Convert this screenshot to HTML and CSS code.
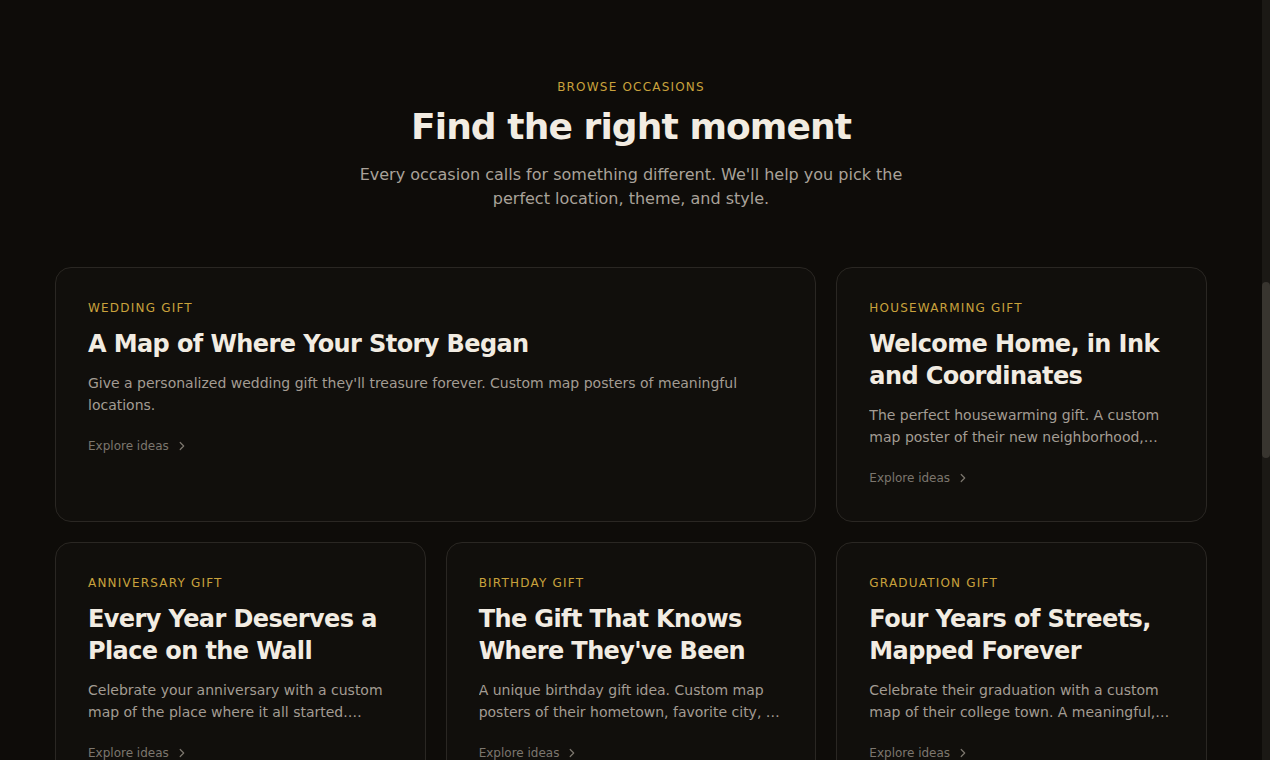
FILE: index.html
```html
<!DOCTYPE html>
<html lang="en">
<head>
<meta charset="utf-8">
<title>Browse occasions</title>
<link rel="stylesheet" href="styles.css">
</head>
<body>
<main class="page">
<section class="occasions">
  <header class="intro">
    <p class="eyebrow">BROWSE OCCASIONS</p>
    <h2 class="heading">Find the right moment</h2>
    <p class="lede">Every occasion calls for something different. We'll help you pick the perfect location, theme, and style.</p>
  </header>
  <div class="grid">
    <a class="card card-wide" href="#">
      <span class="label">WEDDING GIFT</span>
      <h3 class="title">A Map of Where Your Story Began</h3>
      <p class="desc">Give a personalized wedding gift they'll treasure forever. Custom map posters of meaningful locations.</p>
      <span class="more">Explore ideas <svg class="chev" viewBox="0 0 10 10" width="10" height="10"><path d="M3.2 1.5 6.7 5 3.2 8.5" fill="none" stroke="currentColor" stroke-width="1.2" stroke-linecap="round" stroke-linejoin="round"/></svg></span>
    </a>
    <a class="card" href="#">
      <span class="label">HOUSEWARMING GIFT</span>
      <h3 class="title">Welcome Home, in Ink and Coordinates</h3>
      <p class="desc">The perfect housewarming gift. A custom map poster of their new neighborhood, street, or city to make the new place feel like home.</p>
      <span class="more">Explore ideas <svg class="chev" viewBox="0 0 10 10" width="10" height="10"><path d="M3.2 1.5 6.7 5 3.2 8.5" fill="none" stroke="currentColor" stroke-width="1.2" stroke-linecap="round" stroke-linejoin="round"/></svg></span>
    </a>
    <a class="card" href="#">
      <span class="label">ANNIVERSARY GIFT</span>
      <h3 class="title">Every Year Deserves a Place on the Wall</h3>
      <p class="desc">Celebrate your anniversary with a custom map of the place where it all started. Whether it's a first date or a first home.</p>
      <span class="more">Explore ideas <svg class="chev" viewBox="0 0 10 10" width="10" height="10"><path d="M3.2 1.5 6.7 5 3.2 8.5" fill="none" stroke="currentColor" stroke-width="1.2" stroke-linecap="round" stroke-linejoin="round"/></svg></span>
    </a>
    <a class="card" href="#">
      <span class="label">BIRTHDAY GIFT</span>
      <h3 class="title">The Gift That Knows Where They've Been</h3>
      <p class="desc">A unique birthday gift idea. Custom map posters of their hometown, favorite city, or the places that shaped them.</p>
      <span class="more">Explore ideas <svg class="chev" viewBox="0 0 10 10" width="10" height="10"><path d="M3.2 1.5 6.7 5 3.2 8.5" fill="none" stroke="currentColor" stroke-width="1.2" stroke-linecap="round" stroke-linejoin="round"/></svg></span>
    </a>
    <a class="card" href="#">
      <span class="label">GRADUATION GIFT</span>
      <h3 class="title">Four Years of Streets, Mapped Forever</h3>
      <p class="desc">Celebrate their graduation with a custom map of their college town. A meaningful, lasting reminder of where they grew.</p>
      <span class="more">Explore ideas <svg class="chev" viewBox="0 0 10 10" width="10" height="10"><path d="M3.2 1.5 6.7 5 3.2 8.5" fill="none" stroke="currentColor" stroke-width="1.2" stroke-linecap="round" stroke-linejoin="round"/></svg></span>
    </a>
  </div>
</section>
</main>
<div class="scrollbar" aria-hidden="true"><div class="thumb"></div></div>
</body>
</html>
```
FILE: styles.css
```css
html {
  background: #0e0c09;
}

body {
  margin: 0;
  padding-right: 8px;
  background: #0e0c09;
  color: #efe9df;
  font-family: "DejaVu Sans", "Liberation Sans", sans-serif;
}

.page {
  padding-bottom: 120px;
}

.occasions {
  max-width: 1152px;
  margin: 0 auto;
  padding: 80px 0 0;
}

.intro {
  display: flex;
  flex-direction: column;
  align-items: center;
  text-align: center;
  margin-bottom: 56px;
}

.eyebrow {
  margin: 0;
  font-size: 12px;
  line-height: 14px;
  letter-spacing: 1.2px;
  color: #c9a23c;
}

.heading {
  margin: 13px 0 0;
  font-size: 36px;
  line-height: 40px;
  font-weight: 700;
  letter-spacing: -0.025em;
  color: #f2ece2;
}

.lede {
  margin: 16px 0 0;
  max-width: 560px;
  font-size: 16px;
  line-height: 24px;
  color: #a9a299;
}

.grid {
  display: grid;
  grid-template-columns: repeat(3, 1fr);
  gap: 20px 20px;
}

.card {
  display: flex;
  flex-direction: column;
  align-items: flex-start;
  padding: 32px 32px 33px;
  border: 1px solid #2a2723;
  border-radius: 16px;
  background: #110f0c;
  text-decoration: none;
  color: inherit;
}

.card-wide { grid-column: span 2; }

.label {
  font-size: 12px;
  line-height: 16px;
  letter-spacing: 1.2px;
  color: #c9a23c;
}

.title {
  margin: 12px 0 0;
  font-size: 24px;
  line-height: 32px;
  font-weight: 700;
  letter-spacing: -0.025em;
  color: #f2ece2;
}

.desc {
  margin: 12px 0 0;
  font-size: 14px;
  line-height: 22px;
  color: #a39c93;
  display: -webkit-box;
  -webkit-line-clamp: 2;
  -webkit-box-orient: vertical;
  overflow: hidden;
}

.more {
  margin-top: 20px;
  display: inline-flex;
  align-items: center;
  gap: 8px;
  font-size: 12px;
  line-height: 20px;
  color: #7c766e;
}

.chev { display: block; }

.scrollbar {
  position: fixed;
  top: 0;
  right: 0;
  width: 8px;
  height: 100vh;
  background: #1b1915;
}

.thumb {
  position: absolute;
  top: 282px;
  left: 0;
  width: 8px;
  height: 176px;
  border-radius: 4px;
  background: #38352f;
}
```
